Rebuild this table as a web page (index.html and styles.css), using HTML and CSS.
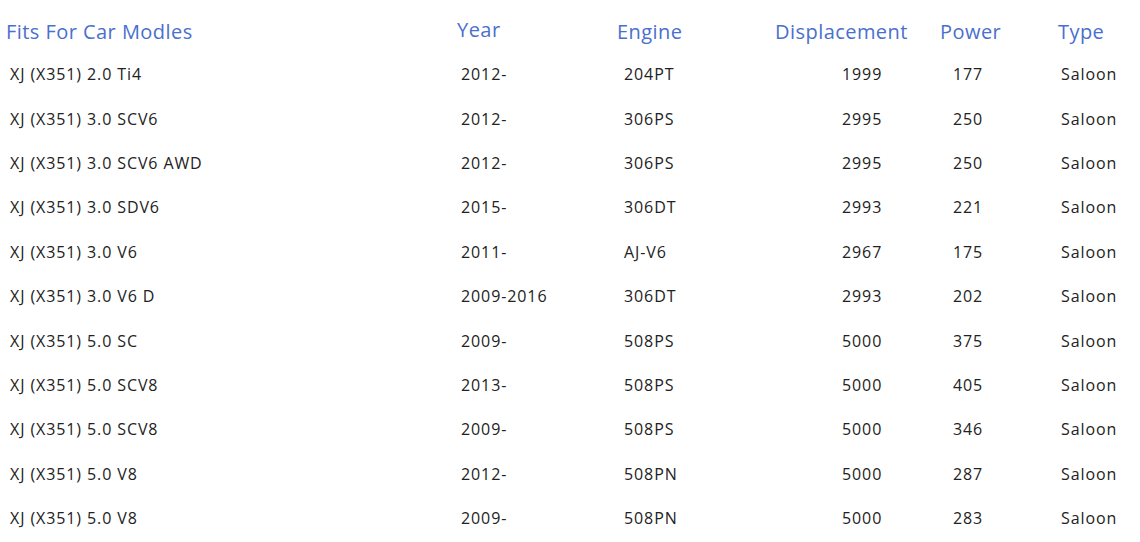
FILE: index.html
```html
<!DOCTYPE html>
<html>
<head>
<meta charset="utf-8">
<link rel="stylesheet" href="styles.css">
</head>
<body>
<div class="table">
  <div class="row head">
    <div class="c model">Fits For Car Modles</div>
    <div class="c year year-h">Year</div>
    <div class="c engine">Engine</div>
    <div class="c disp">Displacement</div>
    <div class="c power">Power</div>
    <div class="c type">Type</div>
  </div>
  <div class="row"><div class="c model">XJ (X351) 2.0 Ti4</div><div class="c year">2012-</div><div class="c engine">204PT</div><div class="c disp">1999</div><div class="c power">177</div><div class="c type">Saloon</div></div>
  <div class="row"><div class="c model">XJ (X351) 3.0 SCV6</div><div class="c year">2012-</div><div class="c engine">306PS</div><div class="c disp">2995</div><div class="c power">250</div><div class="c type">Saloon</div></div>
  <div class="row"><div class="c model">XJ (X351) 3.0 SCV6 AWD</div><div class="c year">2012-</div><div class="c engine">306PS</div><div class="c disp">2995</div><div class="c power">250</div><div class="c type">Saloon</div></div>
  <div class="row"><div class="c model">XJ (X351) 3.0 SDV6</div><div class="c year">2015-</div><div class="c engine">306DT</div><div class="c disp">2993</div><div class="c power">221</div><div class="c type">Saloon</div></div>
  <div class="row"><div class="c model">XJ (X351) 3.0 V6</div><div class="c year">2011-</div><div class="c engine">AJ-V6</div><div class="c disp">2967</div><div class="c power">175</div><div class="c type">Saloon</div></div>
  <div class="row"><div class="c model">XJ (X351) 3.0 V6 D</div><div class="c year">2009-2016</div><div class="c engine">306DT</div><div class="c disp">2993</div><div class="c power">202</div><div class="c type">Saloon</div></div>
  <div class="row"><div class="c model">XJ (X351) 5.0 SC</div><div class="c year">2009-</div><div class="c engine">508PS</div><div class="c disp">5000</div><div class="c power">375</div><div class="c type">Saloon</div></div>
  <div class="row"><div class="c model">XJ (X351) 5.0 SCV8</div><div class="c year">2013-</div><div class="c engine">508PS</div><div class="c disp">5000</div><div class="c power">405</div><div class="c type">Saloon</div></div>
  <div class="row"><div class="c model">XJ (X351) 5.0 SCV8</div><div class="c year">2009-</div><div class="c engine">508PS</div><div class="c disp">5000</div><div class="c power">346</div><div class="c type">Saloon</div></div>
  <div class="row"><div class="c model">XJ (X351) 5.0 V8</div><div class="c year">2012-</div><div class="c engine">508PN</div><div class="c disp">5000</div><div class="c power">287</div><div class="c type">Saloon</div></div>
  <div class="row"><div class="c model">XJ (X351) 5.0 V8</div><div class="c year">2009-</div><div class="c engine">508PN</div><div class="c disp">5000</div><div class="c power">283</div><div class="c type">Saloon</div></div>
</div>
</body>
</html>
```

FILE: styles.css
```css
html, body {
  margin: 0;
  padding: 0;
  background: #ffffff;
}
body {
  font-family: "Open Sans", "Noto Sans", sans-serif;
  color: #222222;
}
.table {
  padding: 10px 0 0 6px;
}
.row {
  display: grid;
  grid-template-columns: 451px 160px 158px 165px 118px 1fr;
  height: 44.4px;
  align-items: center;
  font-size: 16px;
  letter-spacing: 0.9px;
}
.row.head {
  height: 42px;
  font-size: 20px;
  letter-spacing: 0.45px;
  color: #4a6fce;
}
.c {
  white-space: nowrap;
}
.row:not(.head) .model { padding-left: 4px; }
.row:not(.head) .year { padding-left: 4px; }
.row:not(.head) .engine { padding-left: 7px; }
.row:not(.head) .disp { padding-left: 67px; }
.row:not(.head) .power { padding-left: 13px; }
.row:not(.head) .type { padding-left: 3px; }
.year-h { position: relative; top: -2px; }
```
